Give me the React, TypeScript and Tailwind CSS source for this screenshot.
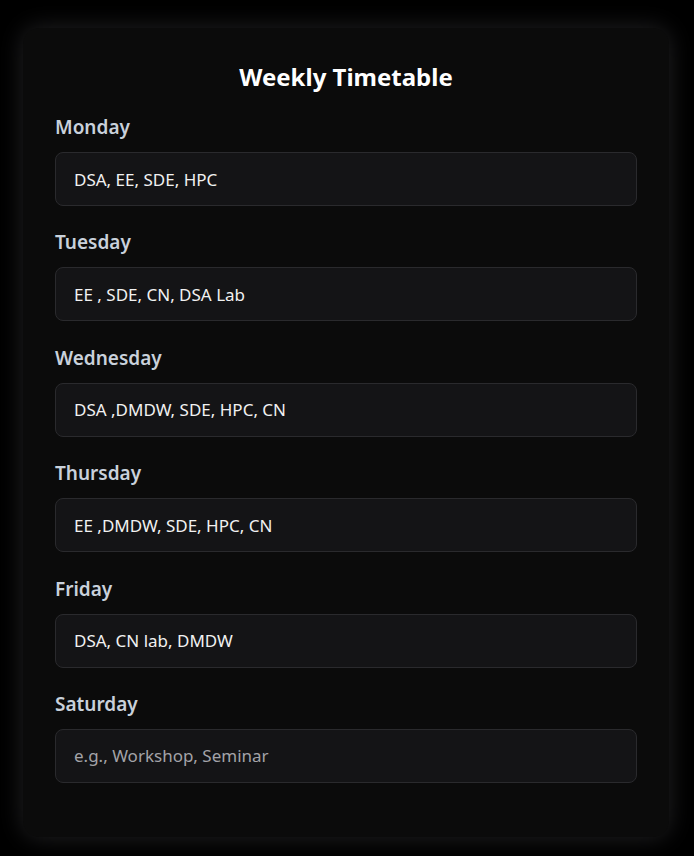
const days = [
  { day: "Monday", value: "DSA, EE, SDE, HPC" },
  { day: "Tuesday", value: "EE , SDE, CN, DSA Lab" },
  { day: "Wednesday", value: "DSA ,DMDW, SDE, HPC, CN" },
  { day: "Thursday", value: "EE ,DMDW, SDE, HPC, CN" },
  { day: "Friday", value: "DSA, CN lab, DMDW" },
  { day: "Saturday", value: "" },
];

export default function App() {
  return (
    <div
      className="min-h-screen bg-black pt-[28px] pl-[23px]"
      style={{ fontFamily: '"Noto Sans", "Open Sans", sans-serif' }}
    >
      <div className="w-[646px] rounded-2xl bg-[#0b0b0b] shadow-[0_0_24px_rgba(200,200,215,0.17)] px-8 pt-[33px] pb-[54px]">
        <h1 className="text-center text-[24px] leading-8 font-bold text-white">Weekly Timetable</h1>
        <div className="mt-5 flex flex-col gap-[22.4px]">
          {days.map((d) => (
            <div key={d.day} className="flex flex-col">
              <label className="text-[19px] leading-7 font-semibold text-[#c9d1db]">{d.day}</label>
              <input
                defaultValue={d.value}
                placeholder="e.g., Workshop, Seminar"
                className="mt-[11px] h-[54px] w-full rounded-lg border border-[#2a2a2d] bg-[#141416] px-[18px] text-[17px] text-[#f1f1f1] placeholder:text-[#a3a3a8] outline-none"
              />
            </div>
          ))}
        </div>
      </div>
    </div>
  );
}
